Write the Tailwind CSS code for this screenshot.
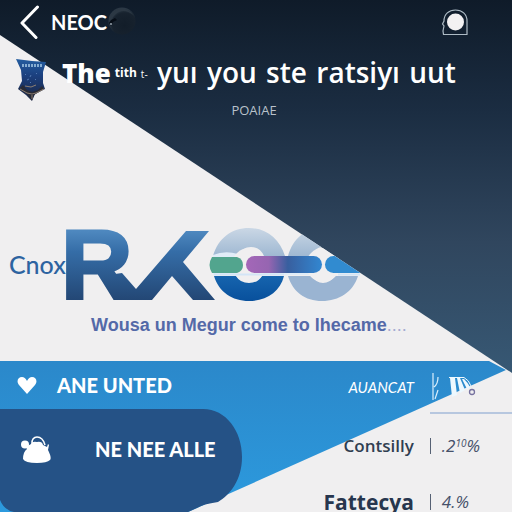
<!DOCTYPE html>
<html lang="en">
<head>
<meta charset="utf-8">
<meta name="viewport" content="width=device-width, initial-scale=1">
<title>NEOC</title>
<script src="https://cdn.jsdelivr.net/npm/@tailwindcss/browser@4"></script>
</head>
<body class="bg-[#f0eff0] font-['Open_Sans','Noto_Sans',sans-serif]">
<main class="relative isolate flex h-screen flex-col overflow-hidden">
  <!-- Diagonal colour fields behind the content -->
  <svg class="absolute inset-0 -z-10 h-full w-full" viewBox="0 0 512 512" preserveAspectRatio="none" aria-hidden="true">
    <defs>
      <linearGradient id="night" x1="0" y1="0" x2="0" y2="1">
        <stop offset="0" stop-color="#0f1b29"/><stop offset=".3" stop-color="#1b2d42"/><stop offset=".65" stop-color="#30465e"/><stop offset="1" stop-color="#375874"/>
      </linearGradient>
      <linearGradient id="sky" x1="0" y1="0" x2="0" y2="1">
        <stop offset="0" stop-color="#2b88ca"/><stop offset="1" stop-color="#2c9ade"/>
      </linearGradient>
    </defs>
    <rect width="512" height="512" fill="#f0eff0"/>
    <path d="M0 0H512V373L0 35Z" fill="url(#night)"/>
    <path d="M0 361H489L506 370L188 512H0Z" fill="url(#sky)"/>
    <path d="M0 409H203C226 409 242 431 242 457C242 480 230 495 218 502Q203 504 197 508L188 512H14Q4 510 0 500Z" fill="#255286"/>
    <path d="M430 413H512" stroke="#7f9fce"/>
  </svg>

  <header class="flex flex-col text-white">
    <nav class="flex h-11 items-center justify-between pl-5 pr-11">
      <div class="flex items-center">
        <button type="button" aria-label="Back" class="mr-2 block">
          <svg class="block" width="23" height="36" viewBox="0 0 23 36" fill="none" stroke="#fff" stroke-width="3" stroke-linecap="round" stroke-linejoin="round"><path d="M17.500 3L2 19L16 33.500"/></svg>
        </button>
        <span class="font-['Lato',sans-serif] text-[20px] font-bold leading-6">NEOC</span>
        <svg class="block" width="30" height="32" viewBox="0 0 30 32" aria-hidden="true">
          <defs><radialGradient id="ball" cx=".6" cy=".65" r=".6"><stop offset="0" stop-color="#121d29"/><stop offset=".75" stop-color="#17222e"/><stop offset="1" stop-color="#2c3946"/></radialGradient></defs>
          <circle cx="15" cy="15" r="13.500" fill="url(#ball)"/>
          <path d="M3 10Q7 2 15 2.500Q22 3 26 9Q19 3 12 6Q5 9 4 18Q1 14 3 10Z" fill="#2c3844"/>
          <path d="M4 14l4-2 2 2-4 2-2 4-2-3Z" fill="#060d16"/><circle cx="4" cy="18" r="1" fill="#9aa6b0"/>
        </svg>
      </div>
      <button type="button" aria-label="Profile">
        <svg class="block" width="27" height="28" viewBox="0 0 27 28" fill="none"><path d="M2.500 26.500H26V13C26 6 21 2 14.500 2S3 6 3 13L1.500 16L3 18L2 23Z" stroke="#aebbc5" stroke-width="1.200"/><circle cx="14.500" cy="14" r="8.500" fill="#f3f1f2"/></svg>
      </button>
    </nav>

    <div class="flex h-14 items-center pl-4 pr-14">
      <svg class="mt-4 block shrink-0" width="30" height="42" viewBox="0 0 30 42" role="img" aria-label="Crest">
        <defs><linearGradient id="crest" x1="0" y1="0" x2="0" y2="1"><stop offset="0" stop-color="#245da0"/><stop offset=".4" stop-color="#1b3f7e"/><stop offset="1" stop-color="#1c2540"/></linearGradient></defs>
        <path d="M0 0L16 2L30 3L27 13V24L29 30L19 35L16 42L10 36L2 30L6 22L5 11Z" fill="url(#crest)"/>
        <path d="M6 6.500H27" stroke="#86add2" stroke-width="3" stroke-dasharray="2 1"/>
        <path d="M3 30L7 26L11 31L16 33L22 31L26 27L28 30L18 36L16 41L11 35Z" fill="#292b36"/>
        <path d="M4 30L11 34L16 35L20 34L28 30M9 27L15 28L20 26M16 36V40" fill="none" stroke="#8c7e72" stroke-width="1"/>
        <path d="M9 15l1 1M15 16l-1 2M21 14l-1 1M11 21l2-1M19 20l1 1M14 24l1-1" stroke="#5379b1"/>
      </svg>
      <h1 class="ml-4 flex grow items-baseline justify-between whitespace-nowrap text-[28px] font-semibold leading-9">
        <span class="flex items-baseline"><span class="text-[26px] font-extrabold">The</span><sup class="ml-1 text-xs leading-4 font-bold">tith</sup><sup class="ml-1 text-[10px] leading-4 font-normal">t-</sup></span>
        <span>yuı</span><span>you</span><span>ste</span><span>ratsiyı</span><span>uut</span>
      </h1>
    </div>
    <p class="pr-1 text-center text-[13px] leading-5 text-[#b9c2cb]">POAIAE</p>
  </header>

  <section class="mt-[107px] flex flex-col">
    <svg class="ml-2 block" width="352" height="76" viewBox="8 227 352 76" role="img" aria-label="Cnox RX logo">
      <defs>
        <linearGradient id="mark" gradientUnits="userSpaceOnUse" x1="0" y1="231" x2="0" y2="300"><stop offset="0" stop-color="#4e88bf"/><stop offset=".3" stop-color="#356da7"/><stop offset="1" stop-color="#234775"/></linearGradient>
        <linearGradient id="mist" x1="0" y1="0" x2="0" y2="1"><stop offset="0" stop-color="#cad7e5"/><stop offset="1" stop-color="#9fb8d2"/></linearGradient>
        <linearGradient id="deep" x1="0" y1="0" x2="0" y2="1"><stop offset="0" stop-color="#1664ae"/><stop offset="1" stop-color="#08509c"/></linearGradient>
        <linearGradient id="bar" x1="0" y1="0" x2="1" y2="0"><stop offset="0" stop-color="#a467b8"/><stop offset=".3" stop-color="#9665b1"/><stop offset=".55" stop-color="#385f9f"/><stop offset="1" stop-color="#3287d1"/></linearGradient>
        <clipPath id="slope"><path d="M0 35L512 373H0Z"/></clipPath>
      </defs>
      <text x="9" y="274" font-family="Lato, sans-serif" font-size="25" font-weight="500" fill="#2d63a0">Cnox</text>
      <text x="61" y="299" font-family="Liberation Sans, sans-serif" font-size="99" font-weight="700" fill="url(#mark)" stroke="url(#mark)" stroke-width="3">R</text>
      <path d="M108 275L122 273L136 289L186 231H209L183 262L215 300H193L172 276L152 300H118Z" fill="url(#mark)"/>
      <g clip-path="url(#slope)">
        <path d="M213 256C218 238 232 228 249 228S280 239 285 256H264Q260 247 251 247T238 256Z" fill="url(#mist)"/>
        <path d="M288 256C293 238 306 228 322 228S354 239 359 256H336Q331 247 323 247T311 256Z" fill="url(#mist)"/>
        <path d="M214 276H236Q240 283 249 283T262 276H284C280 292 266 301 249 301S219 292 214 276Z" fill="url(#deep)"/>
        <path d="M288 276H312Q316 283 323 283T335 276H358C353 292 339 301 322 301S293 292 288 276Z" fill="#9ab4d2"/>
        <path d="M213 255Q225 250 238 254L240 257H285L311 256V275H213Z" fill="#e0ecf7"/>
        <circle cx="249" cy="265" r="17" fill="#f0eff0"/><circle cx="323" cy="265" r="17" fill="#f0eff0"/>
        <path d="M212 257H237Q243 259 243 265T237 273H212Q207 265 212 257Z" fill="#52a58e"/>
        <rect x="246" y="256" width="76" height="17" rx="8.500" fill="url(#bar)"/>
        <rect x="325" y="256" width="50" height="17" rx="8.500" fill="#318bd0"/>
        <path d="M214 274.500H284M338 274.500H360" stroke="#d3e5f6" stroke-width="2"/>
      </g>
    </svg>
    <p class="mt-3 whitespace-nowrap pl-[91px] font-['Liberation_Sans',sans-serif] text-lg leading-5 font-bold text-[#5469a8]">Wousa un Megur come to lhecame<span class="font-normal text-[#a5add0]">....</span></p>
  </section>

  <section class="mt-[26px] flex items-start justify-between text-white">
    <nav class="font-['Lato',sans-serif] text-xl font-black leading-6">
      <a href="#united" class="flex h-12 items-center gap-5 pl-[17px]">
        <svg width="20" height="19" viewBox="0 0 20 19" fill="#fff" aria-hidden="true"><path d="M10 18L2 9C-1 5 1 1 5 1Q8 1 10 5Q12 1 15 1C19 1 21 5 18 9Z"/></svg>
        <span>ANE UNTED</span>
      </a>
      <a href="#alle" class="flex h-20 items-center gap-11 pl-5">
        <svg width="31" height="28" viewBox="0 0 31 28" aria-hidden="true"><path d="M12 9C11 0 22-1 25 10" fill="none" stroke="#fff" stroke-width="1.500"/><circle cx="5" cy="9.500" r="4" fill="#fff"/><path d="M6 12L11 9Q12 6 17 7Q22 6 23 10L27 12L28 9L29 10L28 15Q32 23 30 25Q27 28 17 28Q5 28 3 24Q3 17 7 14Z" fill="#fff"/></svg>
        <span>NE NEE ALLE</span>
      </a>
    </nav>
    <table class="mr-8 font-['Open_Sans',sans-serif]">
      <tbody>
        <tr class="h-[52px] whitespace-nowrap">
          <th scope="row" class="p-0 pr-4 text-right font-['Lato',sans-serif] text-[15px] font-normal italic">AUANCAT</th>
          <td class="w-3 p-0"><svg class="block" width="10" height="30" viewBox="0 0 10 30" fill="none" stroke="#d9effc" aria-hidden="true"><path d="M3 1V28M4 15Q8 12 8 5M5 27L8 18" stroke-width="1.200"/></svg></td>
          <td class="p-0"><svg class="block" width="36" height="24" viewBox="0 0 36 24" aria-hidden="true"><path d="M8 3H13L15 20L10 22Z M15 3H18L23 15L18 18Z M20 4H22Q26 8 28 12L25 14Z" fill="#edf8fe"/><path d="M7 2.500H22Q27 5 29 11" fill="none" stroke="#edf8fe"/><circle cx="30" cy="17" r="2.500" fill="none" stroke="#76729f" stroke-width="1.300"/></svg></td>
        </tr>
        <tr class="h-[66px] text-[#46516a]">
          <th scope="row" class="p-0 pr-4 text-right text-[17px] font-semibold leading-6 text-[#303e50]">Contsilly</th>
          <td class="w-3 p-0"><span class="block h-4 w-px bg-[#566174]"></span></td>
          <td class="p-0 text-[17px] italic leading-5">.2<sup class="text-[10px]">10</sup>%</td>
        </tr>
        <tr class="h-[46px] text-[#46516a]">
          <th scope="row" class="p-0 pr-4 text-right text-[21px] font-bold leading-6 text-[#27364e]">Fattecya</th>
          <td class="w-3 p-0"><span class="block h-4 w-px bg-[#566174]"></span></td>
          <td class="p-0 text-[17px] italic leading-5">4.%</td>
        </tr>
      </tbody>
    </table>
  </section>
</main>
</body>
</html>
